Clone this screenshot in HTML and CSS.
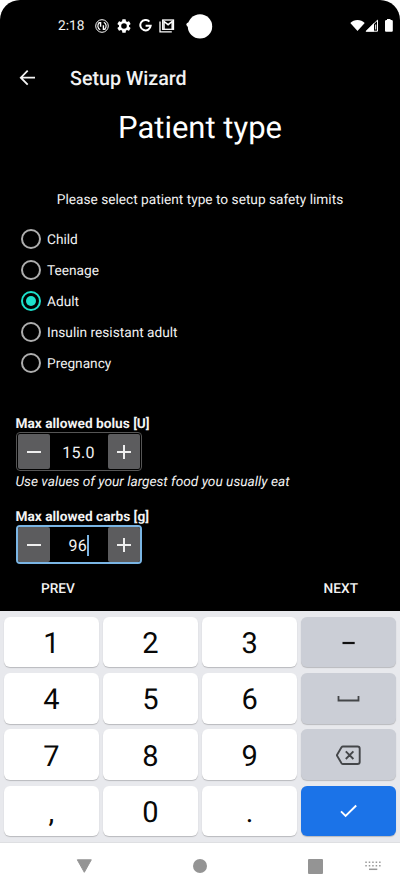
FILE: index.html
```html
<!DOCTYPE html>
<html lang="en">
<head>
<meta charset="utf-8">
<title>Setup Wizard</title>
<link rel="stylesheet" href="styles.css">
</head>
<body>
<div class="phone">
  <main class="screen">
    <div class="status">
      <span class="clock">2:18</span>
      <svg class="ic-sync" width="14" height="14" viewBox="0 0 14 14" fill="none" stroke="#fff"><circle cx="7" cy="7" r="6.3" stroke-width="1"/><path d="M5.200 10.800A4.200 4.200 0 0 1 4.600 3.600M8.800 3.200A4.200 4.200 0 0 1 9.400 10.400" stroke-width="1.200"/><path d="M3.600 3.600H5.600V7.800M10.400 10.400H8.400V6.200" stroke-width="1.400"/></svg>
      <svg class="ic-gear" width="14" height="14" viewBox="2 2 20 20" fill="#fff"><path d="M19.14 12.94c.04-.3.06-.61.06-.94s-.02-.64-.07-.94l2.03-1.58a.5.5 0 0 0 .12-.61l-1.92-3.32a.5.5 0 0 0-.59-.22l-2.39.96a7 7 0 0 0-1.62-.94l-.36-2.54A.5.5 0 0 0 13.92 2.400h-3.84a.5.5 0 0 0-.47.41l-.36 2.54a7 7 0 0 0-1.62.94l-2.39-.96a.5.5 0 0 0-.59.22L2.740 8.870a.5.5 0 0 0 .12.61l2.030 1.580A6 6 0 0 0 4.800 12c0 .31.02.64.07.94l-2.030 1.580a.5.5 0 0 0-.12.61l1.920 3.320c.12.22.37.29.59.22l2.390-.96c.5.38 1.030.7 1.620.94l.36 2.540c.05.24.24.41.48.41h3.840a.5.5 0 0 0 .47-.41l.36-2.540a7 7 0 0 0 1.620-.94l2.390.96c.22.08.47 0 .59-.22l1.920-3.320a.5.5 0 0 0-.12-.61zM12 16a4 4 0 1 1 0-8 4 4 0 0 1 0 8z"/></svg>
      <svg class="ic-g" width="13" height="13" viewBox="0 0 13 13" fill="none" stroke="#fff" stroke-width="2"><path d="M10.400 2.700A5.200 5.200 0 1 0 11.700 6.700H6.600"/></svg>
      <svg class="ic-mail" width="16" height="14" viewBox="0 0 16 14" fill="none" stroke="#fff"><path d="M1 2.500V12.800H12.800" stroke-width="1.300"/><rect x="3.700" y="1" width="10.800" height="9.300" stroke-width="1.300"/><path d="M5 10V2.500L9.100 5.700L13.200 2.500V10" stroke-width="1.500"/></svg>
      <svg class="ic-hole" width="27" height="26" viewBox="0 0 27 26" fill="#fff"><circle cx="14" cy="13.400" r="12.200"/><circle cx="2.600" cy="11.600" r="2.200"/></svg>
      <svg class="ic-signal" width="44" height="14" viewBox="0 0 44 14" fill="#fff"><path d="M.3 4C4-.1 11-.1 14.700 4L7.500 12.000Z"/><path d="M27.500 1.200V12.200H16.300Z" fill="none" stroke="#fff"/><path d="M24 4V12.500H15.500Z"/><path d="M25.700 5.500V10.500" stroke="#fff" stroke-width="1"/><path d="M36.500 1H37V0H40.500V1H41.500Q42.800 1 42.800 2.300V11.700Q42.800 12.700 41.800 12.700H36Q35 12.700 35 11.700V2.300Q35 1 36.500 1Z"/></svg>
    </div>
    <header class="appbar">
      <svg width="16" height="16" viewBox="0 0 16 16" fill="none" stroke="#f4f4f4" stroke-width="1.800"><path d="M16 7.700H2M8.700 .7L1.800 7.700L8.700 14.700"/></svg>
      <h2>Setup Wizard</h2>
    </header>
    <h1>Patient type</h1>
    <p class="intro">Please select patient type to setup safety limits</p>
    <ul class="options">
      <li><i class="radio"></i><span>Child</span></li>
      <li><i class="radio"></i><span>Teenage</span></li>
      <li><i class="radio on"></i><span>Adult</span></li>
      <li><i class="radio"></i><span>Insulin resistant adult</span></li>
      <li><i class="radio"></i><span>Pregnancy</span></li>
    </ul>
    <section class="field">
      <h3>Max allowed bolus [U]</h3>
      <div class="stepper">
        <b class="step minus"></b><span class="value">15.0</span><b class="step plus"></b>
      </div>
      <p class="hint">Use values of your largest food you usually eat</p>
    </section>
    <section class="field carbs">
      <h3>Max allowed carbs [g]</h3>
      <div class="stepper focus">
        <b class="step minus"></b><span class="value">96<i class="caret"></i></span><b class="step plus"></b>
      </div>
    </section>
    <div class="actions"><span>PREV</span><span>NEXT</span></div>
  </main>
  <div class="keys">
    <div class="key">1</div><div class="key">2</div><div class="key">3</div>
    <div class="key gray"><svg width="14" height="4" viewBox="0 0 14 4"><path d="M.5 2H12.700" stroke="#111" stroke-width="2.200"/></svg></div>
    <div class="key">4</div><div class="key">5</div><div class="key">6</div>
    <div class="key gray"><svg width="24" height="8" viewBox="0 0 24 8"><path d="M1.500 1V5.500H21.500V1" fill="none" stroke="#444649" stroke-width="1.800"/></svg></div>
    <div class="key">7</div><div class="key">8</div><div class="key">9</div>
    <div class="key gray"><svg width="26" height="20" viewBox="0 0 26 20" fill="none" stroke="#444649" stroke-width="1.900"><path d="M7 1.500H21.500Q23.700 1.500 23.700 3.700V17Q23.700 19 21.500 19H7Q6.100 19 5.500 18.200L.8 10.200L5.500 2.300Q6.100 1.500 7 1.500ZM9.800 6.400L17.400 14M17.400 6.400L9.800 14"/></svg></div>
    <div class="key">,</div><div class="key">0</div><div class="key">.</div>
    <div class="key blue"><svg width="18" height="14" viewBox="0 0 18 14"><path d="M1 7.300L5.600 12L16.200 1.500" fill="none" stroke="#fff" stroke-width="1.900"/></svg></div>
  </div>
  <nav>
    <svg class="nav-back" width="16" height="15" viewBox="0 0 16 15"><path d="M1.300 .8H15.300L8.300 13.300Z" fill="#949494" stroke="#949494" stroke-linejoin="round"/></svg>
    <i class="nav-home"></i>
    <i class="nav-recent"></i>
    <svg class="nav-kb" width="16" height="10" viewBox="0 0 16 10" stroke="#999" stroke-width="1.500"><path d="M.3 1.300H16M.3 4.800H16" stroke-dasharray="1.500 1.950"/><path d="M4 8.300H12.300"/></svg>
  </nav>
</div>
</body>
</html>
```
FILE: styles.css
```css
* { box-sizing: border-box; margin: 0; padding: 0; }
body { background: #fff; font-family: Roboto, sans-serif; color: #f2f2f2; text-rendering: geometricPrecision; }
.phone { width: 400px; height: 889px; overflow: hidden; display: flex; flex-direction: column; }
.screen { height: 611px; background: #000; border-radius: 20px 20px 0 0; }
.status { height: 51px; display: flex; align-items: center; padding-left: 58px; }
.status svg { flex: none; }
.clock { width: 27px; font-size: 13.700px; line-height: 16px; white-space: nowrap; }
.ic-sync { margin-left: 10px; }
.ic-gear { margin-left: 8px; }
.ic-g { margin-left: 8px; }
.ic-mail { margin-left: 7px; }
.ic-hole { margin-left: 11px; }
.ic-signal { margin-left: 136.500px; }
.appbar { height: 53px; display: flex; align-items: center; padding-left: 19px; }
.appbar h2 { margin-left: 35px; font-size: 19.700px; font-weight: 500; line-height: 24px; padding-top: 2px; }
h1 { height: 47px; line-height: 48px; text-align: center; font-size: 31px; font-weight: 400; color: #fff; }
.intro { margin-top: 39px; height: 20px; line-height: 20px; text-align: center; font-size: 13.700px; }
.options { margin-top: 13.500px; list-style: none; }
.options li { height: 31.100px; display: flex; align-items: center; padding-left: 21px; font-size: 13.700px; line-height: 18px; }
.options span { padding-top: 1px; }
.radio { width: 20px; height: 20px; margin-right: 6px; border: 2px solid #aeaeae; border-radius: 50%; display: flex; align-items: center; justify-content: center; }
.radio.on { border-color: #1de0cb; }
.radio.on::after { content: ""; width: 10px; height: 10px; border-radius: 50%; background: #1de0cb; }
.field { margin: 35.500px 0 0 15.500px; }
.field h3 { height: 18px; line-height: 20px; font-size: 13.700px; font-weight: 700; }
.stepper { width: 126px; height: 39px; display: flex; border: 1px solid #555; border-radius: 4px; padding: 1px; }
.focus { border: 2px solid #7ab5e4; padding: 0; }
.step { width: 32px; background: #5c5c5e; border-radius: 2px; display: flex; align-items: center; justify-content: center; position: relative; }
.step::before, .plus::after { content: ""; position: absolute; width: 14px; height: 2px; background: #eee; }
.plus::after { transform: rotate(90deg); }
.value { flex: 1; display: flex; align-items: center; justify-content: center; font-size: 16px; letter-spacing: .3px; padding-top: 1px; }
.caret { width: 1.500px; height: 21px; background: #7ab5e4; }
.hint { height: 20px; line-height: 22px; font-size: 13.700px; font-style: italic; }
.carbs { margin-top: 16px; }
.actions { margin-top: 15px; padding: 0 42px 0 41px; display: flex; justify-content: space-between; font-size: 13.700px; line-height: 20px; font-weight: 500; }
.keys { height: 232px; background: #e8e9ed; border-bottom: 1px solid #dedfe2; padding: 6px 4px; display: grid; grid-template-columns: repeat(4, 1fr); grid-auto-rows: 50.400px; gap: 5.800px 4.400px; }
.key { background: #fff; color: #080808; border-radius: 6px; box-shadow: 0 1px 1px #b9babd; display: flex; align-items: center; justify-content: center; font-size: 29px; padding-top: 4px; }
.gray { background: #cbced6; padding-top: 1px; }
.blue { background: #1b73e8; padding-top: 1px; }
nav { height: 46px; background: #fff; display: flex; align-items: center; padding-left: 76px; }
.nav-home { width: 14px; height: 14px; border-radius: 50%; background: #949494; margin-left: 101px; }
.nav-recent { width: 15px; height: 15px; border-radius: 1px; background: #949494; margin-left: 100.500px; }
.nav-kb { margin-left: 42px; }
```
